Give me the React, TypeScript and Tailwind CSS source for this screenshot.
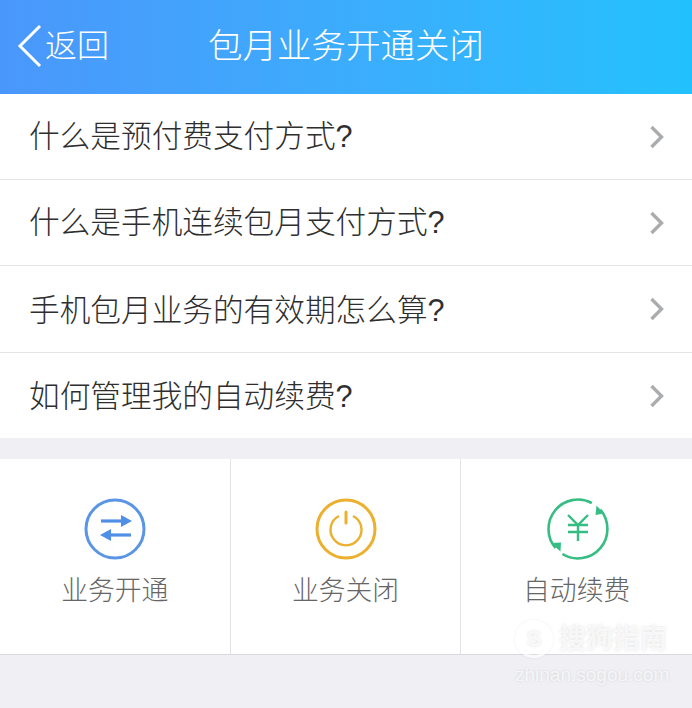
const faqs = [
  { q: "什么是预付费支付方式?", row: "h-[86px]", text: "pt-0" },
  { q: "什么是手机连续包月支付方式?", row: "h-[86px]", text: "pt-0" },
  { q: "手机包月业务的有效期怎么算?", row: "h-[87px]", text: "pt-[2px]" },
  { q: "如何管理我的自动续费?", row: "h-[85px]", text: "pt-[1px]" },
];

function SwitchIcon() {
  return (
    <svg width="62" height="62" viewBox="0 0 62 62" fill="none">
      <circle cx="31" cy="31" r="29" stroke="#5b96e6" strokeWidth="3" />
      <path d="M17 23h22" stroke="#4f8fe6" strokeWidth="3.200" />
      <path d="M37 17l11 6-11 6z" fill="#4f8fe6" />
      <path d="M47 37h-22" stroke="#4f8fe6" strokeWidth="3.200" />
      <path d="M27 31l-11 6 11 6z" fill="#4f8fe6" />
    </svg>
  );
}

function PowerIcon() {
  return (
    <svg className="ml-[2px]" width="62" height="62" viewBox="0 0 62 62" fill="none">
      <circle cx="31" cy="31" r="29" stroke="#ecb02e" strokeWidth="3" />
      <path d="M24 18a15.500 15.500 0 1 0 14 0" stroke="#ecb02e" strokeWidth="2.400" />
      <path d="M31 14v11" stroke="#ecb02e" strokeWidth="3" strokeLinecap="round" />
    </svg>
  );
}

function RenewIcon() {
  return (
    <svg className="ml-[3px]" width="62" height="62" viewBox="0 0 62 62" fill="none">
      <path d="M44.850 5A29.500 29.500 0 0 0 8.400 50" stroke="#35bd83" strokeWidth="2.600" />
      <path d="M15.400 56A29.500 29.500 0 0 0 53.300 11.700" stroke="#35bd83" strokeWidth="2.600" />
      <path d="M4 45l10-.5-.5 9z" fill="#35bd83" />
      <path d="M49.500 7.500l-1 9.500 8.500-1.500z" fill="#35bd83" />
      <path d="M21 17l10 10 10-10M21 27h20M21 34h20M31 27v16" stroke="#35bd83" strokeWidth="2.400" />
    </svg>
  );
}

const actions = [
  { label: "业务开通", icon: <SwitchIcon /> },
  { label: "业务关闭", icon: <PowerIcon /> },
  { label: "自动续费", icon: <RenewIcon /> },
];

export default function App() {
  return (
    <div
      className="relative h-[708px] w-[692px] overflow-hidden bg-[#efeff4]"
      style={{ fontFamily: '"Liberation Sans", "Noto Sans CJK SC", sans-serif' }}
    >
      <header className="relative flex h-[94px] items-center justify-center bg-gradient-to-r from-[#4a97fb] to-[#22c1fd] pb-[1px] text-white">
        <div className="absolute left-[17px] top-0 flex h-full items-center pb-[3px]">
          <svg width="26" height="44" viewBox="0 0 26 44" fill="none">
            <path d="M23 2L3 22l20 20" stroke="white" strokeWidth="3" />
          </svg>
          <span className="ml-[2px] text-[32px] font-light leading-none">返回</span>
        </div>
        <h1 className="text-[34.500px] font-light leading-none">包月业务开通关闭</h1>
      </header>

      <ul className="bg-white">
        {faqs.map((f) => (
          <li
            key={f.q}
            className={`flex items-center justify-between border-b border-[#e5e5e7] pl-[29px] pr-[28px] last:border-b-0 ${f.row}`}
          >
            <span className={`text-[30.670px] font-light leading-none text-[#2e2e2e] ${f.text}`}>{f.q}</span>
            <svg width="15" height="26" viewBox="0 0 15 26" fill="none">
              <path d="M2.500 3l10 10-10 10" stroke="#abacae" strokeWidth="3.400" />
            </svg>
          </li>
        ))}
      </ul>

      <div className="mt-[21px] grid h-[196px] grid-cols-3 border-b border-[#d9d9dc] bg-white">
        {actions.map((a) => (
          <div
            key={a.label}
            className="flex flex-col items-center border-r border-[#e3e3e6] pt-[39px] last:border-r-0"
          >
            {a.icon}
            <span className="mt-[18px] text-[26.800px] font-light leading-none text-[#666666]">{a.label}</span>
          </div>
        ))}
      </div>

      <div className="absolute left-[515px] top-[620px] flex flex-col items-start text-white/70 [text-shadow:0_0_3px_rgba(0,0,0,0.12)]">
        <div className="flex items-center">
          <div className="flex h-[38px] w-[38px] items-center justify-center rounded-full border-[3px] border-white/70 text-[22px] font-bold leading-none shadow-[0_0_3px_rgba(0,0,0,0.08)]">
            S
          </div>
          <span className="ml-[6px] text-[27px] font-bold leading-none">搜狗指南</span>
        </div>
        <span className="mt-[7px] text-[19px] leading-none">zhinan.sogou.com</span>
      </div>
    </div>
  );
}
